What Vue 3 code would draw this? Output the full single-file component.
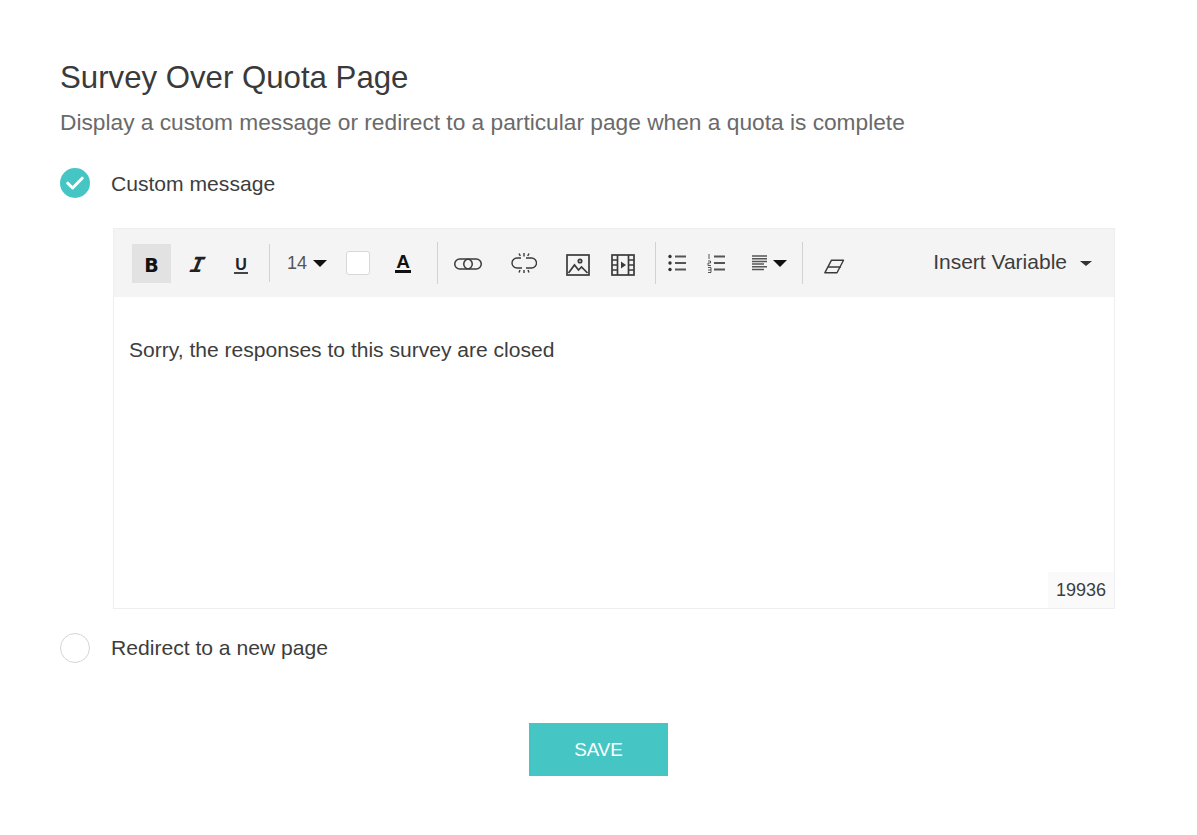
<script setup>
const title = 'Survey Over Quota Page'
const subtitle = 'Display a custom message or redirect to a particular page when a quota is complete'
const body = 'Sorry, the responses to this survey are closed'
</script>

<template>
  <main class="page">
    <h1 class="title">{{ title }}</h1>
    <p class="subtitle">{{ subtitle }}</p>

    <div class="option option-first">
      <span class="radio radio-on">
        <svg width="18" height="14" viewBox="0 0 18 14"><path d="M1.800 7.200 6.600 12 16.200 2.200" fill="none" stroke="#fff" stroke-width="3" stroke-linecap="round" stroke-linejoin="round"/></svg>
      </span>
      <span class="option-label">Custom message</span>
    </div>

    <section class="editor">
      <div class="toolbar">
        <span class="slot glyph-b w-b">B</span>
        <span class="slot w-i"><span class="glyph-i">I</span></span>
        <span class="slot w-u"><span class="glyph-u">U</span></span>
        <span class="sep sep-1"></span>
        <span class="size">14<i class="caret"></i></span>
        <span class="swatch"></span>
        <span class="slot w-a"><span class="glyph-a">A</span></span>
        <span class="sep sep-2"></span>
        <span class="slot w-link">
          <svg class="down-1" width="28" height="12" viewBox="0 0 28 12" fill="none" stroke="#3a3a3a" stroke-width="1.500"><rect x=".75" y="1" width="17.500" height="10" rx="5"/><rect x="9.750" y="1" width="17.500" height="10" rx="5"/></svg>
        </span>
        <span class="slot w-unlink">
          <svg width="26" height="20" viewBox="0 0 26 20" fill="none" stroke="#3a3a3a" stroke-width="1.400"><path d="M10 5H6a5 5 0 0 0 0 10h5"/><path d="M15 5h5.500a5 5 0 0 1 0 10H15"/><path d="M13 0v3.500M8 .5l1.300 2.500M18 .5 16.700 3M13 17v3M9 17l-1 2.500M17 17l1 2.500"/></svg>
        </span>
        <span class="slot w-image">
          <svg class="down-2" width="24" height="22" viewBox="0 0 24 22" fill="none" stroke="#3a3a3a" stroke-width="1.700"><rect x="1" y="1" width="22" height="20"/><circle cx="14" cy="7" r="1.700"/><path d="M2.500 19 8.500 11l4 5 3-3 6 6"/></svg>
        </span>
        <span class="slot w-film">
          <svg class="down-2" width="24" height="22" viewBox="0 0 24 22" fill="none" stroke="#3a3a3a" stroke-width="1.700"><rect x="1" y="1" width="22" height="20"/><path d="M6.500 1v20M17.500 1v20M1 6h5.500M1 11h5.500M1 16h5.500M17.500 6H23M17.500 11H23M17.500 16H23"/><path d="M10 7.500 15 11l-5 3.500z" fill="#3a3a3a" stroke="none"/></svg>
        </span>
        <span class="sep sep-3"></span>
        <span class="slot w-list">
          <svg width="18" height="18" viewBox="0 0 18 18"><circle cx="2" cy="2.500" r="1.700" fill="#333"/><circle cx="2" cy="9" r="1.700" fill="#333"/><circle cx="2" cy="15.500" r="1.700" fill="#333"/><path d="M7 2.500h11M7 9h11M7 15.500h11" stroke="#555" stroke-width="1.800"/></svg>
        </span>
        <span class="slot w-ol">
          <svg width="18" height="20" viewBox="0 0 18 20"><path d="M2 1v5M1 8h2.500v2H1v2.500h3M1 14.500h3v5H1M1 17h3" fill="none" stroke="#444" stroke-width=".9"/><path d="M7 3.500h11M7 10h11M7 16.500h11" stroke="#555" stroke-width="1.800"/></svg>
        </span>
        <span class="align">
          <svg width="16" height="16" viewBox="0 0 16 16"><path d="M0 1h15M0 3.700h15M0 6.400h15M0 9h12M0 11.700h15M0 14.400h12" stroke="#555" stroke-width="1.500"/></svg>
          <i class="caret"></i>
        </span>
        <span class="sep sep-4"></span>
        <span class="slot w-eraser">
          <svg class="down-3" width="22" height="15" viewBox="0 0 22 15" fill="none" stroke="#3a3a3a" stroke-width="1.400" stroke-linejoin="round"><path d="M8.500 1.200H20.500L14 13.800H1.800zM5 8h13"/></svg>
        </span>
        <span class="insert">Insert Variable<i class="caret-small"></i></span>
      </div>
      <div class="content">
        <p class="message">{{ body }}</p>
        <span class="counter">19936</span>
      </div>
    </section>

    <div class="option option-last">
      <span class="radio"></span>
      <span class="nudge-up">Redirect to a new page</span>
    </div>

    <div class="actions">
      <button class="save" type="button">SAVE</button>
    </div>
  </main>
</template>

<style>
html, body { margin: 0; background: #fff; }
</style>

<style scoped>
.page {
  box-sizing: border-box;
  width: 1197px;
  height: 835px;
  padding: 58px 82px 0 60px;
  background: #fff;
  color: #3d3d3d;
  font-family: "Liberation Sans", Arial, sans-serif;
  overflow: hidden;
}
.title {
  margin: 0;
  font-size: 31.200px;
  font-weight: 400;
  line-height: 40px;
  color: #3a3a3a;
}
.subtitle {
  margin: 12px 0 0;
  font-size: 22.730px;
  line-height: 24px;
  color: #6a6a6a;
}
.option {
  display: flex;
  align-items: center;
  gap: 21px;
  height: 30px;
  margin-top: 34px;
  font-size: 21.100px;
}
.option-label { padding-top: 2px; }
.option-last { margin-top: 24px; }
.nudge-up { margin-top: -1px; }
.radio {
  box-sizing: border-box;
  display: flex;
  align-items: center;
  justify-content: center;
  width: 30px;
  height: 30px;
  border: 1px solid #d5d5d5;
  border-radius: 50%;
  background: #fff;
}
.radio-on { border: none; background: #45c6c4; }
.editor {
  box-sizing: border-box;
  width: 1002px;
  height: 381px;
  margin: 30px 0 0 53px;
  border: 1px solid #eeeeee;
  display: flex;
  flex-direction: column;
}
.toolbar {
  display: flex;
  align-items: center;
  flex: none;
  height: 68px;
  padding: 0 22px 0 18px;
  background: #f4f4f4;
  color: #222;
}
.slot {
  display: flex;
  align-items: center;
  justify-content: center;
  flex: none;
  height: 39px;
}
.w-b { width: 39px; background: #e2e2e2; }
.w-i { width: 52px; }
.w-u { width: 36px; }
.w-a { width: 66px; }
.w-link { width: 60px; }
.w-unlink { width: 52px; }
.w-image { width: 56px; }
.w-film { width: 34px; }
.w-list { width: 42px; }
.w-ol { width: 36px; }
.w-eraser { width: 62px; }
.down-1 { margin-top: 1px; }
.down-2 { margin-top: 3px; }
.down-3 { margin-top: 6px; }
.glyph-b {
  box-sizing: border-box;
  padding-top: 3px;
  font-family: "DejaVu Sans", sans-serif;
  font-weight: 900;
  font-size: 19px;
  color: #111;
}
.glyph-i {
  display: inline-block;
  margin-top: 5px;
  font-family: "Liberation Mono", monospace;
  font-style: italic;
  font-weight: 700;
  font-size: 23px;
  line-height: 20px;
  color: #222;
  transform: skewX(-12deg);
}
.glyph-u {
  margin-top: 5px;
  padding: 0 1px;
  font-size: 16px;
  font-weight: 700;
  line-height: 15px;
  border-bottom: 2px solid #444;
  color: #222;
}
.glyph-a {
  padding: 0 1px;
  font-size: 19px;
  font-weight: 700;
  line-height: 17px;
  border-bottom: 3px solid #111;
  color: #111;
}
.sep {
  flex: none;
  width: 1px;
  height: 42px;
  background: #d2d2d2;
}
.sep-1 { height: 38px; margin-left: 10px; }
.sep-2 { margin-left: 1px; }
.sep-3 { margin-left: 15px; }
.sep-4 { margin-left: 15px; }
.size {
  display: flex;
  align-items: center;
  flex: none;
  gap: 6px;
  width: 39px;
  margin-left: 17px;
  font-size: 18px;
  color: #555;
}
.caret {
  flex: none;
  width: 0;
  height: 0;
  border-left: 7px solid transparent;
  border-right: 7px solid transparent;
  border-top: 7px solid #111;
}
.swatch {
  box-sizing: border-box;
  flex: none;
  width: 24px;
  height: 24px;
  margin-left: 20px;
  border: 1px solid #d8d8d8;
  border-radius: 3px;
  background: #fff;
}
.align {
  display: flex;
  align-items: center;
  flex: none;
  gap: 5px;
  margin-left: 18px;
}
.insert {
  display: flex;
  align-items: center;
  margin-left: auto;
  margin-top: -2px;
  font-size: 21px;
  color: #3d3d3d;
}
.caret-small {
  width: 0;
  height: 0;
  margin-left: 13px;
  margin-top: 2px;
  border-left: 6px solid transparent;
  border-right: 6px solid transparent;
  border-top: 5px solid #333;
}
.content {
  position: relative;
  flex: 1;
  background: #fff;
}
.message {
  margin: 41px 0 0 15px;
  font-size: 21.050px;
  line-height: 24px;
  color: #3d3d3d;
}
.counter {
  position: absolute;
  right: 0;
  bottom: 0;
  box-sizing: border-box;
  width: 66px;
  height: 36px;
  padding-left: 8px;
  font-size: 18px;
  line-height: 36px;
  background: #fafafa;
  color: #3d3d3d;
}
.actions {
  display: flex;
  justify-content: center;
  margin: 60px -82px 0 -60px;
}
.save {
  width: 139px;
  height: 53px;
  border: none;
  background: #45c6c4;
  color: #fff;
  font-family: inherit;
  font-size: 18.800px;
}
</style>
